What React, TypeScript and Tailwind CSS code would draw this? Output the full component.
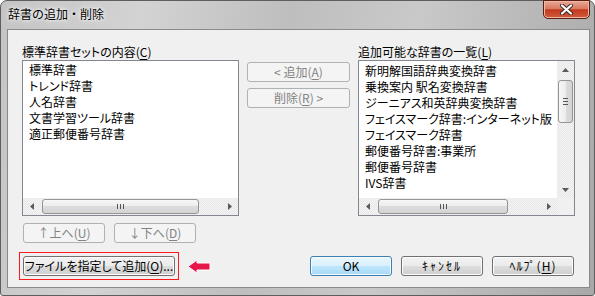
const jp = "[font-family:'Noto_Sans_CJK_JP','Noto_Sans',sans-serif] [font-feature-settings:'palt']";

const btnBase =
  "flex items-center justify-center h-[20px] rounded-[3px] border text-[12px] leading-none whitespace-nowrap";
const btnNormal =
  "border-[#707070] bg-[linear-gradient(#f2f2f2_0%,#ebebeb_50%,#dddddd_50%,#cfcfcf_100%)] shadow-[inset_0_0_0_1px_#fcfcfc] text-black";
const btnDefault =
  "border-[#3c7fb1] bg-[linear-gradient(#eaf6fd_0%,#d9f0fc_50%,#bee6fd_50%,#a7d9f5_100%)] shadow-[inset_0_0_0_1px_#f4fbff] text-black";
const btnDisabled = "border-[#adb2b5] bg-[#f4f4f4] text-[#838383]";

const track =
  "bg-[repeating-conic-gradient(#e6e6e6_0_25%,#f5f5f5_0_50%)] [background-size:2px_2px]";

const Key = ({ k }: { k: string }) => (
  <span className="underline underline-offset-[2px]">{k}</span>
);

const Arrow = ({ dir }: { dir: "l" | "r" | "u" | "d" }) => {
  const pts = {
    l: "4,0 0,3.5 4,7",
    r: "0,0 4,3.5 0,7",
    u: "0,4 3.5,0 7,4",
    d: "0,0 3.5,4 7,0",
  }[dir];
  const horiz = dir === "l" || dir === "r";
  return (
    <svg width={horiz ? 4 : 7} height={horiz ? 7 : 4}>
      <polygon points={pts} fill="#5a5a5a" />
    </svg>
  );
};

const HScroll = ({ thumb }: { thumb: number }) => (
  <div className={`flex h-[17px] ${track}`}>
    <div className="flex w-[17px] items-center justify-center">
      <Arrow dir="l" />
    </div>
    <div className="flex flex-1 items-center">
      <div
        className="ml-[2px] flex h-[15px] items-center justify-center gap-[2px] rounded-[3px] border border-[#959595] bg-[linear-gradient(#f7f7f7_0%,#ececec_50%,#dcdcdc_50%,#d4d4d4_100%)]"
        style={{ width: thumb }}
      >
        <div className="h-[5px] w-[1px] bg-[#555]" />
        <div className="h-[5px] w-[1px] bg-[#555]" />
        <div className="h-[5px] w-[1px] bg-[#555]" />
      </div>
    </div>
    <div className="flex w-[17px] items-center justify-center">
      <Arrow dir="r" />
    </div>
  </div>
);

const VScroll = ({ thumb }: { thumb: number }) => (
  <div className={`flex w-[17px] flex-col ${track}`}>
    <div className="flex h-[17px] items-center justify-center">
      <Arrow dir="u" />
    </div>
    <div className="flex flex-1 flex-col items-center">
      <div
        className="mt-[2px] flex w-[15px] flex-col items-center justify-center gap-[2px] rounded-[3px] border border-[#959595] bg-[linear-gradient(to_right,#f7f7f7_0%,#ececec_50%,#dcdcdc_50%,#d4d4d4_100%)]"
        style={{ height: thumb }}
      >
        <div className="h-[1px] w-[5px] bg-[#555]" />
        <div className="h-[1px] w-[5px] bg-[#555]" />
        <div className="h-[1px] w-[5px] bg-[#555]" />
      </div>
    </div>
    <div className="flex h-[17px] items-center justify-center">
      <Arrow dir="d" />
    </div>
  </div>
);

const standard = ["標準辞書", "トレンド辞書", "人名辞書", "文書学習ツール辞書", "適正郵便番号辞書"];
const available = [
  "新明解国語辞典変換辞書",
  "乗換案内 駅名変換辞書",
  "ジーニアス和英辞典変換辞書",
  "フェイスマーク辞書:インターネット版",
  "フェイスマーク辞書",
  "郵便番号辞書:事業所",
  "郵便番号辞書",
  "IVS辞書",
];

export default function App() {
  return (
    <div
      className={`${jp} flex h-[296px] w-[595px] flex-col rounded-t-[7px] rounded-b-[3px] border border-[#5e5e5e] bg-[linear-gradient(100deg,#c4c4c4_0%,#d3d3d3_22%,#bebebe_45%,#c9c9c9_65%,#a8a8a8_100%)] text-[12px] text-black`}
    >
      {/* title bar */}
      <div className="flex h-[28px] items-start">
        <div className="mt-[5px] pl-[7px] text-[12px] leading-[16px] [font-feature-settings:normal] [text-shadow:0_0_6px_#fff,0_0_3px_#fff]">
          辞書の追加・削除
        </div>
        <div className="ml-auto mr-[4px] flex h-[19px] w-[47px] -mt-[1px] items-center justify-center rounded-b-[5px] border border-[#5a1d10] bg-[linear-gradient(#eaa897_0%,#d97a62_45%,#c3391c_52%,#d05b3c_100%)] shadow-[inset_0_0_0_1px_#f0b8a8]">
          <svg width="13" height="11" viewBox="0 0 13 11">
            <path d="M2 1.5 L11 9.5 M11 1.5 L2 9.5" stroke="#3a2a2a" strokeWidth="4" strokeLinecap="round" />
            <path d="M2 1.5 L11 9.5 M11 1.5 L2 9.5" stroke="#ffffff" strokeWidth="2.2" strokeLinecap="round" />
          </svg>
        </div>
      </div>

      {/* client area */}
      <div className="mb-[7px] ml-[6px] mr-[4px] flex flex-1 flex-col border border-[#8a8a8a] bg-[#f0f0f0] px-[14px] pt-[14px]">
        <div className="flex gap-[8px]">
          {/* left list */}
          <div className="flex w-[217px] flex-col">
            <div className="h-[16px] leading-[16px]">
              標準辞書セットの内容(<Key k="C" />)
            </div>
            <div className="flex h-[156px] flex-col border border-[#828790] bg-white">
              <div className="flex-1 overflow-hidden pl-[6px] pt-[1px]">
                {standard.map((s) => (
                  <div key={s} className="h-[16px] whitespace-nowrap leading-[16px]">
                    {s}
                  </div>
                ))}
              </div>
              <HScroll thumb={157} />
            </div>
          </div>

          {/* middle buttons */}
          <div className="flex w-[103px] flex-col gap-[6px] pt-[18px]">
            <div className={`${btnBase} ${btnDisabled}`}>
              &lt; 追加(<Key k="A" />)
            </div>
            <div className={`${btnBase} ${btnDisabled}`}>
              削除(<Key k="R" />) &gt;
            </div>
          </div>

          {/* right list */}
          <div className="flex w-[217px] flex-col">
            <div className="h-[16px] leading-[16px]">
              追加可能な辞書の一覧(<Key k="L" />)
            </div>
            <div className="flex h-[156px] flex-col border border-[#828790] bg-white">
              <div className="flex flex-1">
                <div className="flex-1 overflow-hidden pl-[6px] pt-[2px]">
                  {available.map((s) => (
                    <div key={s} className="h-[16px] whitespace-nowrap leading-[16px]">
                      {s}
                    </div>
                  ))}
                </div>
                <VScroll thumb={43} />
              </div>
              <div className="flex">
                <div className="flex-1">
                  <HScroll thumb={130} />
                </div>
                <div className="h-[17px] w-[17px] bg-[#f0f0f0]" />
              </div>
            </div>
          </div>
        </div>

        {/* up / down */}
        <div className="ml-[1px] mt-[7px] flex gap-[9px]">
          <div className={`${btnBase} ${btnDisabled} w-[82px]`}>
            ↑上へ(<Key k="U" />)
          </div>
          <div className={`${btnBase} ${btnDisabled} w-[82px]`}>
            ↓下へ(<Key k="D" />)
          </div>
        </div>

        {/* bottom row */}
        <div className="mt-[9px] flex items-center">
          <div className="-ml-[3px] border border-[#ff1a1a] p-[3px]">
            <div className={`${btnBase} ${btnNormal} w-[152px]`}>
              ファイルを指定して追加(<Key k="O" />)...
            </div>
          </div>
          <svg className="ml-[8px]" width="24" height="15" viewBox="0 0 24 15">
            <polygon
              points="1,7.5 10,1 10,4 23,4 23,11 10,11 10,14"
              fill="#e8174a"
              stroke="#ffffff"
              strokeWidth="1"
              strokeLinejoin="round"
            />
          </svg>
          <div className="ml-auto mr-[1px] flex gap-[9px]">
            <div className={`${btnBase} ${btnDefault} w-[82px]`}>OK</div>
            <div className={`${btnBase} ${btnNormal} w-[82px] tracking-[2px] [font-feature-settings:normal]`}>
              ｷｬﾝｾﾙ
            </div>
            <div className={`${btnBase} ${btnNormal} w-[82px] tracking-[1px] [font-feature-settings:normal]`}>
              ﾍﾙﾌﾟ(<Key k="H" />)
            </div>
          </div>
        </div>
      </div>
    </div>
  );
}
